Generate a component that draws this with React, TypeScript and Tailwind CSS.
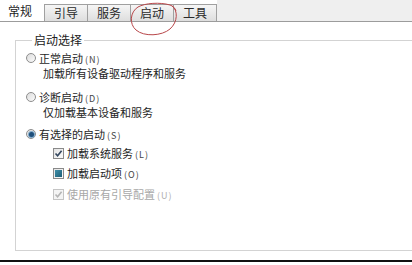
import React from "react";

const tabs = ["引导", "服务", "启动", "工具"];

const Radio = ({ checked }: { checked?: boolean }) => (
  <span className="flex h-[10px] w-[10px] shrink-0 items-center justify-center rounded-full border border-[#8d8d8d] bg-gradient-to-br from-[#dcdcdc] to-[#fbfbfb]">
    {checked && <span className="h-[5px] w-[5px] rounded-full bg-[#1f4f7a] ring-1 ring-[#7fa8c8]" />}
  </span>
);

const Check = ({ state, disabled }: { state: "on" | "mixed"; disabled?: boolean }) => (
  <span
    className={`flex h-[11px] w-[11px] shrink-0 items-center justify-center border ${
      disabled ? "border-[#c4c4c4] bg-[#f4f4f4]" : "border-[#8a8a8a] bg-gradient-to-br from-[#e4e4e4] to-[#fcfcfc]"
    }`}
  >
    {state === "on" ? (
      <svg width="9" height="9" viewBox="0 0 9 9">
        <path
          d="M1.5 4.5 L3.6 6.8 L7.6 1.8"
          fill="none"
          stroke={disabled ? "#b5b5b5" : "#33465e"}
          strokeWidth="1.6"
        />
      </svg>
    ) : (
      <span className="h-[7px] w-[7px] bg-gradient-to-br from-[#3f8fa8] to-[#1d5f78]" />
    )}
  </span>
);

const Key = ({ k, muted }: { k: string; muted?: boolean }) => (
  <span className={`ml-[2px] text-[9px] leading-none tracking-[1px] ${muted ? "text-[#b0b0b0]" : "text-[#444]"}`}>({k})</span>
);

// one line of the group box, fixed 14px tall so spacing stays exact
const Row = ({ className = "", children }: { className?: string; children: React.ReactNode }) => (
  <div className={`flex h-[14px] items-center gap-[3px] ${className}`}>{children}</div>
);

export default function App() {
  return (
    <div className="relative h-[265px] w-[412px] overflow-hidden bg-white font-['Noto_Sans_CJK_SC',sans-serif] text-[11px] leading-[14px] text-[#1e1e1e]">
      {/* tab strip */}
      <div className="flex h-[22px] border-b border-[#9c9c9c]">
        <div className="mt-[1px] flex w-[45px] items-center justify-start bg-white pl-[8px] text-[12px]">常规</div>
        {tabs.map((t) => (
          <div
            key={t}
            className="-ml-[1px] mt-[4px] flex w-[44px] items-center justify-center border border-b-0 border-[#a0a0a0] bg-gradient-to-b from-[#f6f6f6] to-[#dedede] text-[12px] text-[#2a2a2a]"
          >
            {t}
          </div>
        ))}
        <div className="flex-1 bg-[#efefef]" />
      </div>

      {/* panel */}
      <div className="flex h-[238px] flex-col pl-[15px] pt-[11px]">
        <fieldset className="flex h-[218px] flex-col border border-r-0 border-[#d3d3d3] pl-[10px]">
          <legend className="ml-[6px] px-[2px] text-[12px] leading-[14px] text-[#222]">启动选择</legend>

          <Row className="mt-[4px]">
            <Radio />
            <span>
              正常启动<Key k="N" />
            </span>
          </Row>
          <Row className="ml-[17px] mt-[1px]">加载所有设备驱动程序和服务</Row>

          <Row className="mt-[10px]">
            <Radio />
            <span>
              诊断启动<Key k="D" />
            </span>
          </Row>
          <Row className="ml-[17px] mt-[1px]">仅加载基本设备和服务</Row>

          <Row className="mt-[8px]">
            <Radio checked />
            <span>
              有选择的启动<Key k="S" />
            </span>
          </Row>

          <div className="ml-[27px] mt-[5px] flex flex-col gap-[6px]">
            <Row>
              <Check state="on" />
              <span>
                加载系统服务<Key k="L" />
              </span>
            </Row>
            <Row>
              <Check state="mixed" />
              <span>
                加载启动项<Key k="O" />
              </span>
            </Row>
            <Row className="mt-[1px] text-[#a8a8a8]">
              <Check state="on" disabled />
              <span>
                使用原有引导配置<Key k="U" muted />
              </span>
            </Row>
          </div>
        </fieldset>
      </div>

      <div className="h-[2px] bg-[#111]" />

      {/* red hand-drawn ellipse */}
      <svg className="absolute left-[128px] top-0" width="54" height="40" viewBox="0 0 54 40">
        <path
          d="M44 6 C50 10 50 22 42 29 C34 36 16 37 8 30 C1 24 2 12 10 7 C17 3 32 2 42 5 C45 6 47 8 48 11"
          fill="none"
          stroke="#b8474a"
          strokeWidth="1"
        />
      </svg>
    </div>
  );
}
